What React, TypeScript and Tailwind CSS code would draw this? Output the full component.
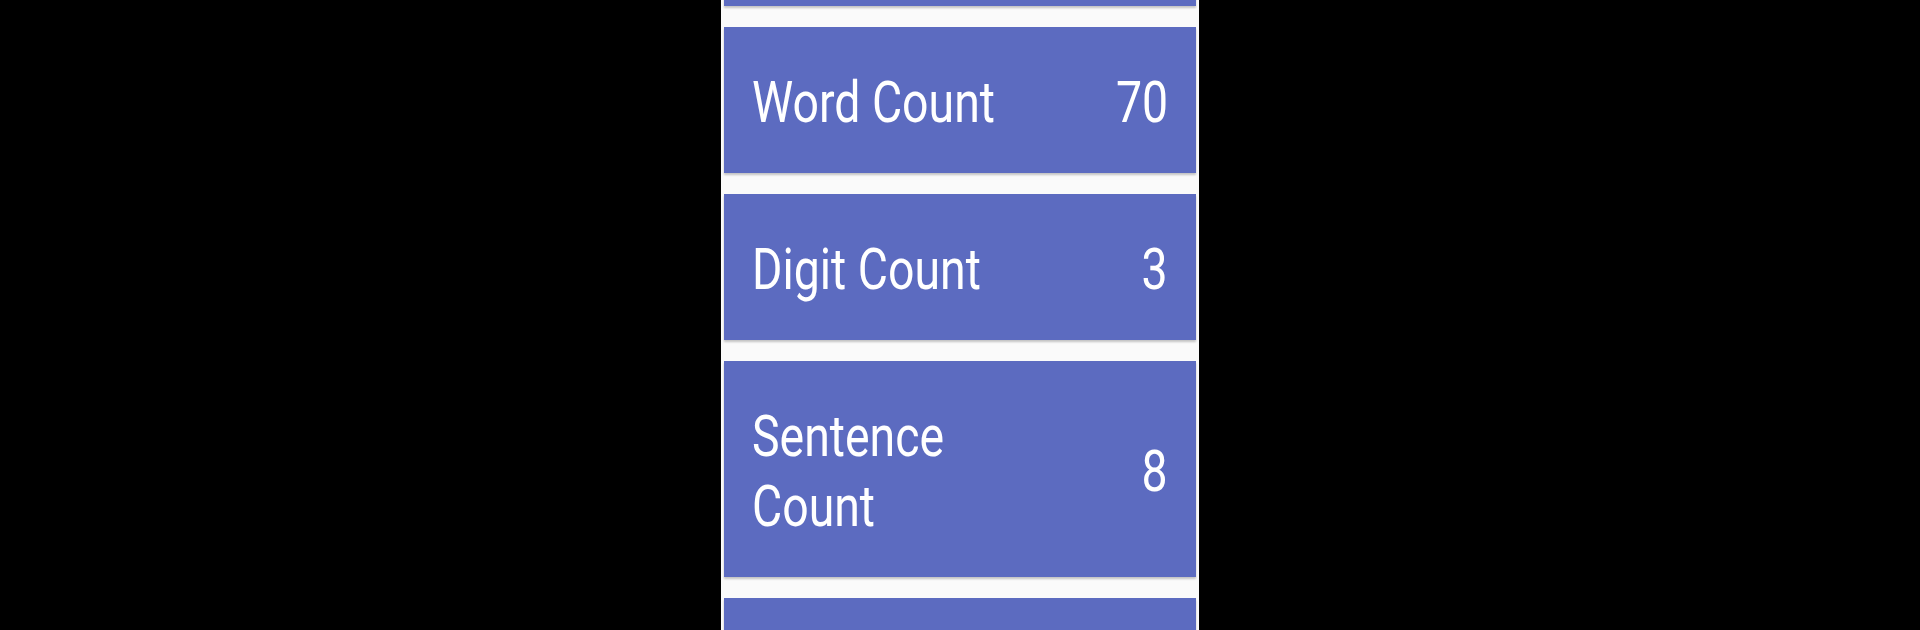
const rows = [
  { label: "Letter Count", value: "25" },
  { label: "Word Count", value: "70" },
  { label: "Digit Count", value: "3" },
  { label: "Sentence Count", value: "8" },
  { label: "Line Count", value: "2" },
];

function StatCard({ label, value }: { label: string; value: string }) {
  return (
    <div className="flex shrink-0 items-center justify-between bg-[#5c6bc0] px-[28px] pt-[40px] pb-[36px] text-white shadow-[0_2px_2px_rgba(0,0,0,0.22)]">
      <div className="w-[340px] shrink-0 origin-left scale-x-[0.8] text-[58px] leading-[70px]">{label}</div>
      <div className="origin-right scale-x-[0.8] text-[58px] leading-[70px]">{value}</div>
    </div>
  );
}

export default function App() {
  return (
    <div className="flex h-[630px] w-full justify-center overflow-hidden bg-black font-['Roboto','Noto_Sans',sans-serif]">
      <div className="w-[478px] overflow-hidden bg-[#fafafa] px-[3px]">
        <div className="-mt-[140px] flex flex-col gap-[21px]">
          {rows.map((r) => (
            <StatCard key={r.label} label={r.label} value={r.value} />
          ))}
        </div>
      </div>
    </div>
  );
}
